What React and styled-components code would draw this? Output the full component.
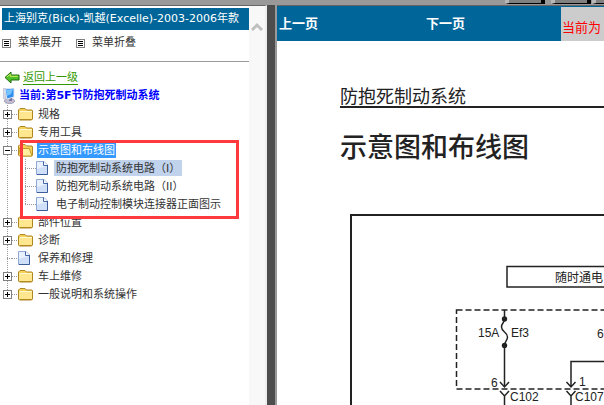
import React, { useState } from 'react'
import styled, { createGlobalStyle } from 'styled-components'

const tree = [
  { title: '规格', folder: true },
  { title: '专用工具', folder: true },
  {
    title: '示意图和布线图',
    folder: true,
    selected: true,
    pages: ['防抱死制动系统电路（I）', '防抱死制动系统电路（II）', '电子制动控制模块连接器正面图示'],
  },
  { title: '部件位置', folder: true },
  { title: '诊断', folder: true },
  { title: '保养和修理', folder: false },
  { title: '车上维修', folder: true },
  { title: '一般说明和系统操作', folder: true },
]

function MenuIcon() {
  return (
    <svg width="9" height="9" viewBox="0 0 9 9" shapeRendering="crispEdges">
      <rect x="0" y="0" width="9" height="9" fill="#808080" />
      <rect x="1" y="1" width="7" height="7" fill="#fff" />
      <path d="M2 2h5v1h-5zM2 4h5v1h-5zM2 6h5v1h-5z" fill="#000" />
    </svg>
  )
}

function BackIcon() {
  return (
    <svg width="16" height="13" viewBox="0 0 16 13">
      <path d="M1 6.500L7 1v3h8v5H7v3z" fill="#4fc02a" stroke="#1c6b0b" />
      <path d="M3 6L6.300 3.200V5.300H14" fill="none" stroke="#d0f05a" />
    </svg>
  )
}

function ComputerIcon() {
  return (
    <svg width="14" height="16" viewBox="0 0 14 16">
      <ellipse cx="6.500" cy="13" rx="5" ry="2.500" fill="#c3bfd2" stroke="#8682a0" strokeWidth=".7" />
      <path d="M7 10h2v3H6z" fill="#77739a" />
      <path d="M0 1l3-1v12l-3-2z" fill="#d9d9e6" stroke="#a7a7bd" strokeWidth=".6" />
      <path d="M2 1l9-1v9l-7 2z" fill="#2f8ded" stroke="#dce5f5" />
      <path d="M3 2l7-1-2 5-4 2z" fill="#75c4ff" />
    </svg>
  )
}

function FolderIcon({ open }) {
  return (
    <svg width="16" height="14" viewBox="0 0 16 14">
      <path d="M.5 12V3L2 1.500h5L8.500 3H14l.5 1v8l-1 1h-12z" fill="#f6d25b" stroke="#ae8622" />
      {open ? (
        <path d="M3 13L.8 5.500h10.400L14 13z" fill="#fff0a0" stroke="#c49925" />
      ) : (
        <>
          <path d="M1 5h13v7H1z" fill="#ffe790" />
          <path d="M1.500 4.500H14" stroke="#fff9cf" />
          <path d="M2 12.500h12" stroke="#b48a1e" />
        </>
      )}
    </svg>
  )
}

function PageIcon() {
  return (
    <svg width="12" height="14" viewBox="0 0 12 14">
      <path d="M.5.5H8L11.500 4v9.500H.5z" fill="#e9f1ff" stroke="#8fa8d6" />
      <path d="M1 8l10-3v8H1z" fill="#cfdff8" />
      <path d="M7.500.5V4.500H11.500" fill="#fff" stroke="#4567a8" />
      <path d="M11.500 4v9.500H1" fill="none" stroke="#3c5c9c" />
    </svg>
  )
}

function WiringDiagram() {
  return (
    <Drawing width="700" height="480" viewBox="0 0 700 480">
      <rect x="1" y="1" width="698" height="478" />
      <rect x="157" y="52.500" width="200" height="20.500" strokeWidth="1.500" />
      <rect x="106.500" y="96" width="400" height="79" strokeWidth="1.500" strokeDasharray="6 3" />

      {/* fuse Ef3 */}
      <path d="M154.500 96v9M154.500 132v40M154.500 105c0 4-3 4-3 8 0 5 6 5 6 10 0 4-3 4-3 9" strokeWidth="1.500" />
      <circle cx="154.500" cy="105" r="2.700" />
      <circle cx="154.500" cy="131.500" r="2.700" />
      <path d="M150 168l4.500 5 4.500-5M150 177l4.500 5 4.500-5M154.500 182v100" strokeWidth="1.500" />

      <path d="M400 147.500H221v25M216.500 168l4.500 5 4.500-5M216.500 177l4.500 5 4.500-5M221 182v100" strokeWidth="1.500" />

      <text x="205" y="68">随时通电</text>
      <text x="128" y="123">15A</text>
      <text x="161" y="123">Ef3</text>
      <text x="247" y="124">6</text>
      <text x="141" y="173">6</text>
      <text x="229" y="172">1</text>
      <text x="160" y="187">C102</text>
      <text x="225" y="187">C107</text>
    </Drawing>
  )
}

function TreeItem({ item }) {
  const [open, setOpen] = useState(!!item.pages)

  return (
    <li>
      <Row>
        {item.folder ? (
          <Toggle type="button" aria-label={item.title} aria-expanded={open} onClick={() => setOpen(!open)}>
            <svg width="7" height="7" viewBox="0 0 7 7" shapeRendering="crispEdges">
              <path d={open ? 'M1 3h5v1h-5z' : 'M1 3h5v1h-5zM3 1h1v5h-1z'} />
            </svg>
          </Toggle>
        ) : (
          <Joint />
        )}
        <Dots />
        <IconCell>{item.folder ? <FolderIcon open={open} /> : <PageIcon />}</IconCell>
        <TreeLink href="#" $selected={item.selected}>{item.title}</TreeLink>
      </Row>
      {item.pages && open && (
        <Pages>
          {item.pages.map((page, i) => (
            <Row key={page} as="li">
              <Dots $wide />
              <PageIcon />
              <PageLink href="#" $current={i === 0}>{page}</PageLink>
            </Row>
          ))}
          <Marker />
        </Pages>
      )}
    </li>
  )
}

function App() {
  return (
    <>
      <GlobalStyle />
      <Window>
        <TopStrip>
          <StripButton />
          <StripButton />
          <StripButton />
        </TopStrip>
        <Frames>
          <Sidebar>
            <SidebarBody>
              <Title>上海别克(Bick)-凯越(Excelle)-2003-2006年款</Title>
              <MenuBar>
                <MenuButton type="button"><MenuIcon />菜单展开</MenuButton>
                <MenuButton type="button"><MenuIcon />菜单折叠</MenuButton>
              </MenuBar>
              <BackRow>
                <BackIcon />
                <BackLink href="#">返回上一级</BackLink>
              </BackRow>
              <Current><ComputerIcon />当前:第5F节防抱死制动系统</Current>
              <Tree>
                {tree.map((item) => <TreeItem key={item.title} item={item} />)}
              </Tree>
            </SidebarBody>
            <ScrollTrack>
              <svg width="12" height="10" viewBox="0 0 12 10">
                <path d="M1 8l5-5 5 5" fill="none" stroke="#bfbfbf" strokeWidth="3" />
              </svg>
            </ScrollTrack>
          </Sidebar>
          <Divider />
          <Content>
            <PageNav>
              <NavLink href="#">上一页</NavLink>
              <NavLink href="#">下一页</NavLink>
              <Position>当前为</Position>
            </PageNav>
            <Article>
              <Section>防抱死制动系统</Section>
              <Heading>示意图和布线图</Heading>
              <WiringDiagram />
            </Article>
          </Content>
        </Frames>
      </Window>
    </>
  )
}

const GlobalStyle = createGlobalStyle`
  * {
    box-sizing: border-box;
  }
  body {
    margin: 0;
    background: white;
    color: #333;
    font-family: "DejaVu Sans", "Noto Sans CJK SC", sans-serif;
    font-size: 11px;
    line-height: 18px;
  }
  svg {
    display: block;
    flex-shrink: 0;
  }
  ul {
    list-style: none;
    margin: 0;
    padding: 0;
  }
`;

const Window = styled.div`
  display: flex;
  flex-direction: column;
  height: 100vh;
  overflow: hidden;
`;

const TopStrip = styled.div`
  display: flex;
  justify-content: flex-end;
  gap: 6px;
  height: 5px;
  flex-shrink: 0;
  background: #999;
  overflow: hidden;
`;

const StripButton = styled.div`
  width: 40px;
  height: 4px;
  flex-shrink: 0;
  background: #808080;
  border-left: 4px solid #b8b8b8;
  border-right: 4px solid black;
  border-bottom: 1px solid black;
  &:last-child {
    width: 12px;
    margin-left: -5px;
    border-right: 0;
  }
`;

const Frames = styled.div`
  display: flex;
  flex: 1;
  min-height: 0;
`;

const Sidebar = styled.nav`
  display: flex;
  width: 267px;
  flex-shrink: 0;
  border-top: 1px solid #666;
  border-right: 2px solid #eee;
`;

const SidebarBody = styled.div`
  flex: 1;
  min-width: 0;
  white-space: nowrap;
`;

const ScrollTrack = styled.div`
  width: 16px;
  flex-shrink: 0;
  padding: 16px 2px;
  background: #f8f8f8;
`;

const Divider = styled.div`
  width: 10px;
  flex-shrink: 0;
  background: #4d4d4d;
  border-right: 2px solid #999;
`;

const Title = styled.div`
  margin: 2px 0 0 2px;
  padding: 0 2px;
  height: 22px;
  line-height: 22px;
  color: white;
  background: #069;
`;

const MenuBar = styled.div`
  display: flex;
  gap: 14px;
  height: 32px;
  padding: 4px 2px;
  border-bottom: 1px solid #999;
`;

const MenuButton = styled.button`
  display: flex;
  align-items: center;
  gap: 7px;
  height: 18px;
  padding: 0;
  border: 0;
  background: none;
  color: #333;
  font: inherit;
`;

const BackRow = styled.div`
  display: flex;
  align-items: center;
  gap: 3px;
  padding: 7px 4px 0;
`;

const BackLink = styled.a`
  height: 16px;
  line-height: 18px;
  color: #390;
  text-decoration: none;
  border-bottom: 1px solid #390;
`;

const Current = styled.div`
  display: flex;
  align-items: center;
  gap: 2px;
  padding: 0 3px;
  height: 18px;
  margin: 2px 0 0;
  line-height: 20px;
  color: blue;
  font-weight: bold;
`;

const Tree = styled.ul`
  margin-left: 3px;
  background: repeating-linear-gradient(#999 0 1px, transparent 1px 2px) 4px 0 / 1px 190px no-repeat;
`;

const Row = styled.div`
  display: flex;
  align-items: center;
  height: 18px;
`;

const Toggle = styled.button`
  display: flex;
  align-items: center;
  justify-content: center;
  width: 9px;
  height: 9px;
  padding: 0;
  border: 1px solid #808080;
  background: white;
`;

const Joint = styled.span`
  width: 9px;
  height: 1px;
  background: repeating-linear-gradient(90deg, #999 0 1px, transparent 1px 2px) 4px 0 no-repeat;
`;

const Dots = styled.span`
  width: ${({ $wide }) => ($wide ? '11px' : '6px')};
  height: 1px;
  background: repeating-linear-gradient(90deg, #999 0 1px, transparent 1px 2px);
`;

const IconCell = styled.span`
  width: 16px;
`;

const TreeLink = styled.a`
  margin-left: 3px;
  padding: 0 1px;
  height: 16px;
  line-height: 18px;
  text-decoration: none;
  color: ${({ $selected }) => ($selected ? 'white' : '#333')};
  background: ${({ $selected }) => ($selected ? '#39f' : 'none')};
`;

const PageLink = styled.a`
  margin-left: 6px;
  padding: 0 2px;
  height: 16px;
  line-height: 18px;
  color: #333;
  text-decoration: none;
  background: ${({ $current }) => ($current ? '#c0d2ec' : 'none')};
`;

const Pages = styled.ul`
  position: relative;
  padding-left: 22px;
  background: repeating-linear-gradient(#999 0 1px, transparent 1px 2px) 22px 0 / 1px 46px no-repeat;
`;

const Marker = styled.li`
  position: absolute;
  top: -19px;
  right: 10px;
  bottom: -6px;
  left: 17px;
  border: 3px solid #ff3a3f;
  pointer-events: none;
`;

const Content = styled.main`
  flex: 1;
  min-width: 0;
  overflow: hidden;
  border-top: 1px solid #666;
`;

const PageNav = styled.div`
  display: grid;
  grid-template-columns: 147px 135px 1fr;
  height: 35px;
  padding: 1px 0 1px 2px;
  background: #069;
`;

const NavLink = styled.a`
  color: white;
  font-size: 13px;
  font-weight: bold;
  line-height: 34px;
  text-decoration: none;
`;

const Position = styled.div`
  padding: 0 1px;
  color: red;
  background: #ccc;
  font-size: 13px;
  line-height: 42px;
  overflow: hidden;
`;

const Article = styled.article`
  padding: 42px 0 0 63px;
  color: #222;
  overflow: hidden;
`;

const Section = styled.div`
  height: 25px;
  line-height: 28px;
  font-size: 18px;
  border-bottom: 2px solid #222;
`;

const Heading = styled.h1`
  margin: 20px 0 46px;
  line-height: 40px;
  font-size: 27px;
  font-weight: 500;
`;

const Drawing = styled.svg`
  margin-left: 10px;
  fill: none;
  stroke: #222;
  stroke-width: 2;
  circle {
    fill: #222;
    stroke: none;
  }
  text {
    fill: #222;
    stroke: none;
    font-family: "Liberation Sans", "Noto Sans CJK SC", sans-serif;
    font-size: 12px;
  }
`;

export default App
